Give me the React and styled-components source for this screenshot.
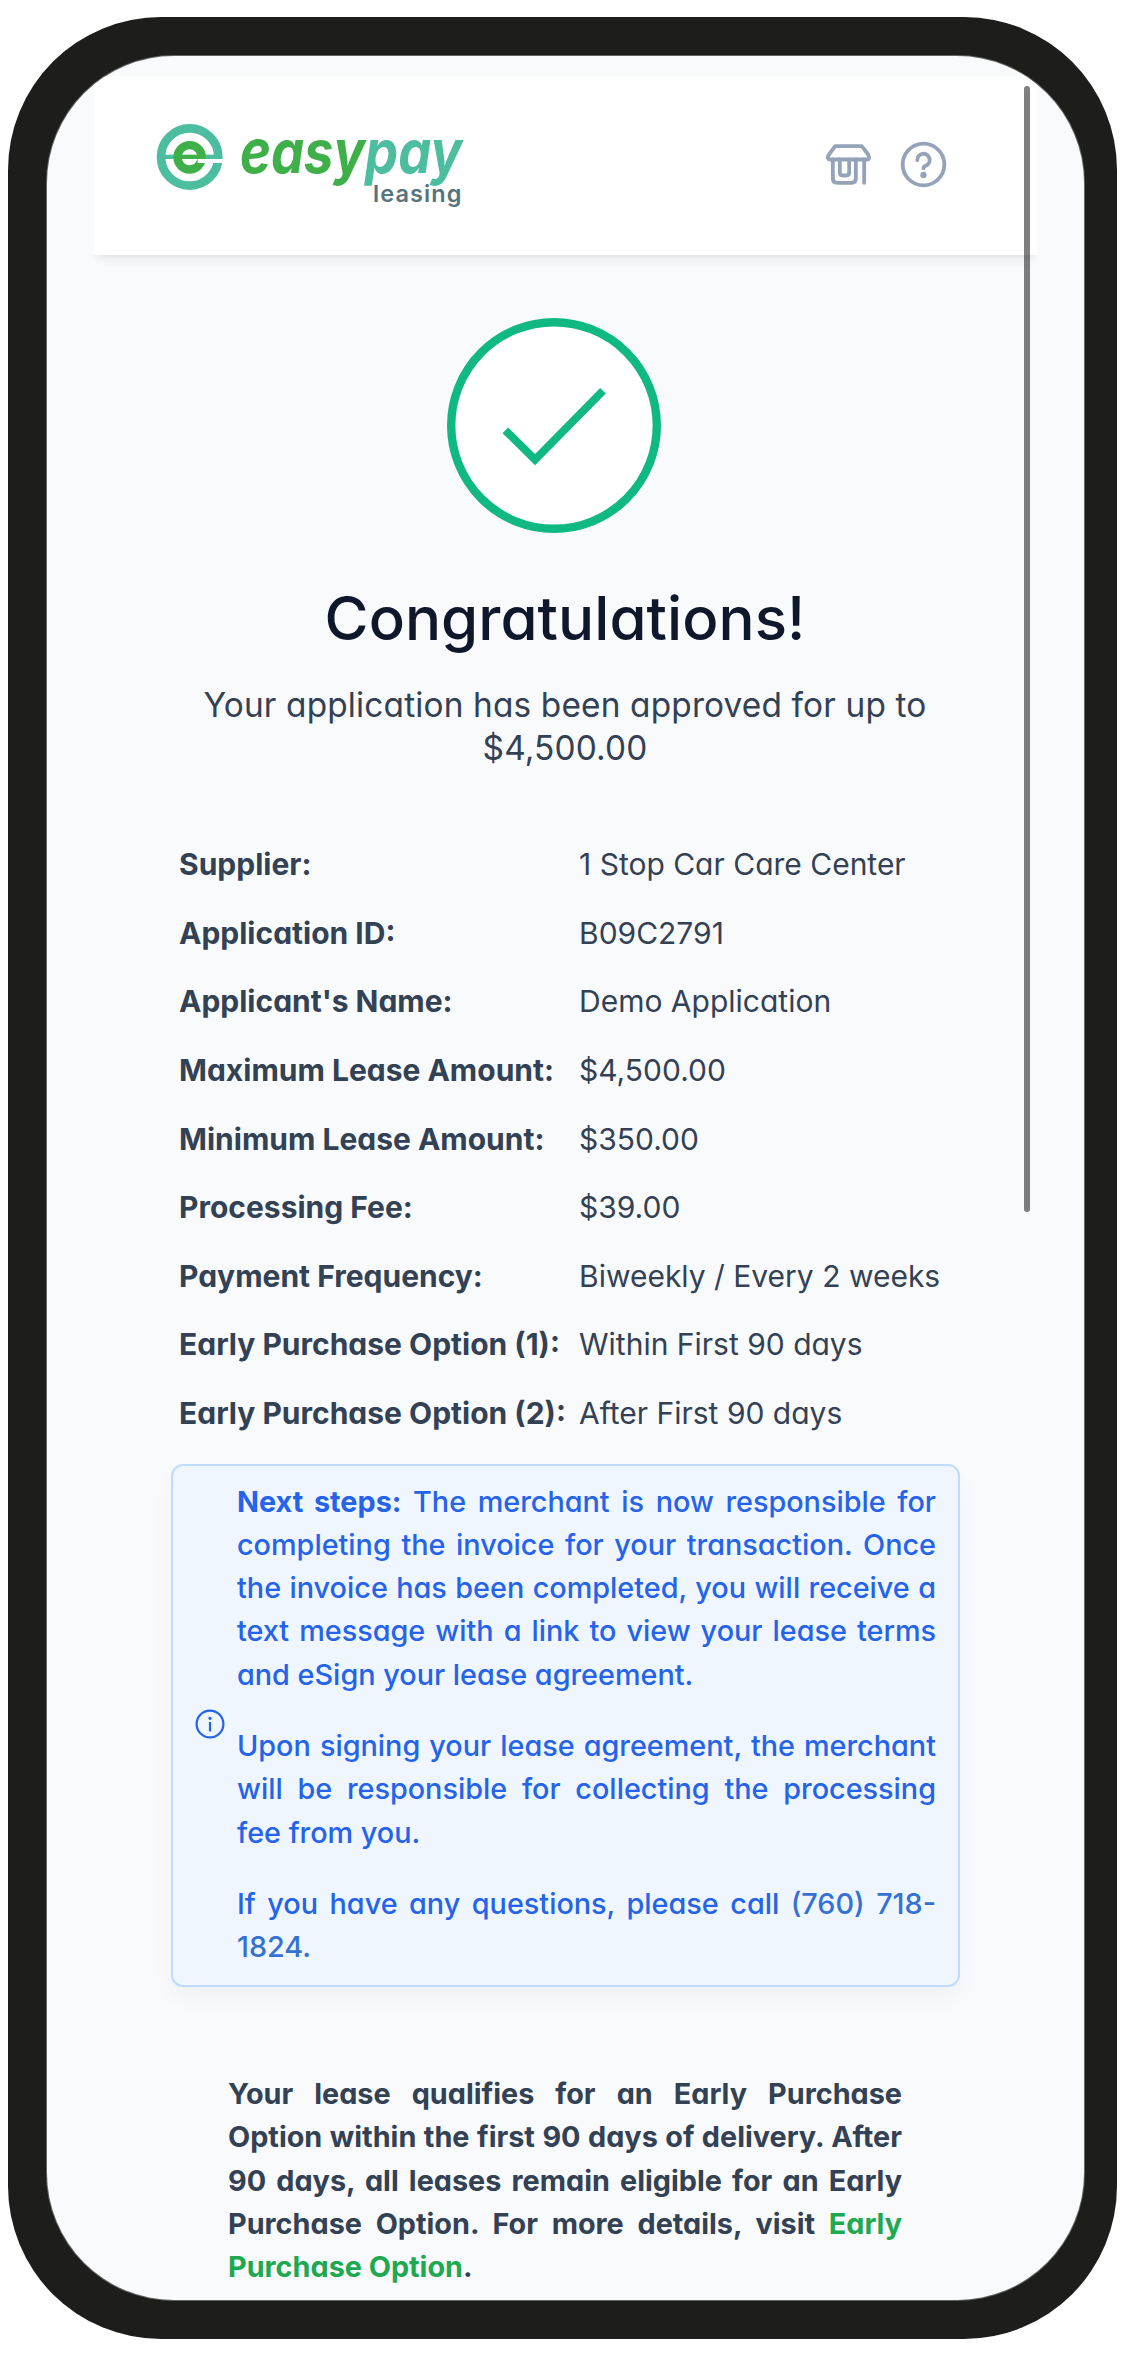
import React from "react";
import styled, { createGlobalStyle } from "styled-components";

const GlobalStyle = createGlobalStyle`
  body {
    margin: 0;
    background: #ffffff;
    font-family: Inter, "Liberation Sans", sans-serif;
    font-feature-settings: "cv11";
    color: #334155;
  }
  *, *::before, *::after { box-sizing: border-box; }
  p, h1, dl, dd, dt { margin: 0; }
`;

const Page = styled.div`
  height: 2356px;
  padding: 17px 8px;
`;

const PhoneFrame = styled.div`
  width: 1109px;
  height: 2322px;
  padding: 39px 33px 39px 39px;
  border-radius: 153px;
  background: #1d1d1b;
`;

const Screen = styled.div`
  position: relative;
  height: 100%;
  padding: 20px 47px 0;
  border-radius: 127px;
  background: #f8fafc;
  box-shadow: 0 0 0 1px #636363;
  overflow: hidden;
`;

const Scrollbar = styled.div`
  position: absolute;
  top: 30px;
  left: 977px;
  width: 6px;
  height: 1126px;
  border-radius: 3px;
  background: rgba(0, 0, 0, 0.5);
`;

const Header = styled.header`
  display: flex;
  justify-content: space-between;
  height: 179px;
  padding: 47px 89px 0 62px;
  background: #ffffff;
  box-shadow: 0 6px 9px -3px rgba(0, 0, 0, 0.1);
  clip-path: inset(0 0 -24px 0);
`;

const HeaderIcons = styled.nav`
  display: flex;
  gap: 26px;
  height: 49px;
  margin-top: 17px;
  color: #94a3b8;
`;

const Main = styled.main`
  display: flex;
  flex-direction: column;
  padding: 63px 77px 0;
`;

const CheckBadge = styled.svg`
  align-self: center;
  width: 214px;
  height: 215px;
  margin-right: 23px;
`;

const Title = styled.h1`
  margin-top: 49px;
  margin-right: 1px;
  color: #0f172a;
  font-size: 60px;
  font-weight: 500;
  line-height: 72px;
  letter-spacing: 0.06px;
  text-align: center;
`;

const Subtitle = styled.p`
  margin: 30px 20px 0 19px;
  font-size: 33.4px;
  line-height: 43px;
  letter-spacing: 0.15px;
  text-align: center;
`;

const Details = styled.dl`
  display: grid;
  grid-template-columns: 400px 1fr;
  grid-auto-rows: 68.6px;
  align-items: center;
  margin-top: 60px;
  padding-left: 8px;
  font-size: 30px;
`;

const Label = styled.dt`
  font-weight: 700;
  white-space: nowrap;
`;

const Value = styled.dd`
  white-space: nowrap;
`;

const Notice = styled.section`
  display: flex;
  align-items: center;
  gap: 12px;
  margin-top: 17px;
  padding: 13.500px 22px 16.500px;
  border: 2px solid #bfdbfe;
  border-radius: 12px;
  background: #eff6ff;
  box-shadow: 0 12px 22px -4px rgba(100, 116, 139, 0.07);
  color: #2563eb;
`;

const InfoIcon = styled.svg`
  flex: none;
  width: 30px;
  height: 30px;
`;

const NoticeText = styled.div`
  display: flex;
  flex-direction: column;
  gap: 28.4px;
  width: 699px;
  font-size: 28.8px;
  font-weight: 500;
  line-height: 43.2px;
  text-align: justify;
`;

const Strong = styled.strong`
  font-weight: 700;
`;

const Phone = styled.span`
  color: #3371d3;
`;

const Footnote = styled.p`
  width: 674px;
  margin: 85px 0 0 57px;
  font-size: 28.8px;
  font-weight: 700;
  line-height: 43.2px;
  text-align: justify;
`;

const Link = styled.a`
  color: #1ea951;
`;

const WordMark = styled.text`
  font-family: Inter, "Open Sans", sans-serif;
  font-style: italic;
  font-weight: 700;
  font-size: 60px;
`;

const SubMark = styled.text`
  font-family: Inter, "Open Sans", sans-serif;
  font-feature-settings: normal;
  font-weight: 600;
  font-size: 23.5px;
`;

function Logo() {
  return (
    <svg width="320" height="90" viewBox="156 123 320 90">
      <g transform="translate(150 110) scale(0.33333)">
        <circle cx="119" cy="141" r="86" fill="none" stroke="#4dbda0" strokeWidth="26" />
        <rect x="40" y="134" width="160" height="13" fill="#4dbda0" />
        <circle cx="119" cy="142" r="36.5" fill="#fff" stroke="#3fb049" strokeWidth="25" />
        <rect x="84" y="134" width="83" height="13" fill="#3fb049" />
        <rect x="143" y="147" width="78" height="12" fill="#fff" />
      </g>
      <WordMark x="240" y="173" textLength="222" lengthAdjust="spacingAndGlyphs">
        <tspan fill="#3fb049">easy</tspan>
        <tspan fill="#4dbda0">pay</tspan>
      </WordMark>
      <SubMark x="373" y="202" fill="#56747a" textLength="88.500" lengthAdjust="spacing">
        leasing
      </SubMark>
    </svg>
  );
}

function StoreIcon() {
  return (
    <svg width="49" height="49" viewBox="133.500 240.500 147 147" fill="none" stroke="currentColor" strokeWidth="11.500" strokeLinecap="round" strokeLinejoin="round">
      <path d="M167 259H247L266 284Q273 299 262 299H152Q141 299 147 286Z" />
      <path d="M160 299V356Q160 369 173 369H216Q229 369 229 356V299" />
      <path d="M181 299V338Q181 347 190 347H200Q209 347 209 338V299" />
      <path d="M254 299V369" />
    </svg>
  );
}

function HelpIcon() {
  return (
    <svg width="49" height="49" viewBox="358.500 240.500 147 147" fill="none" stroke="currentColor" strokeWidth="11.500" strokeLinecap="round" strokeLinejoin="round">
      <circle cx="432" cy="314" r="62.500" />
      <path d="M413.500 301A18.500 18.500 0 1 1 440 317Q432 320 432 325" />
      <circle cx="432" cy="345.500" r="9.500" fill="currentColor" stroke="none" />
    </svg>
  );
}

const rows = [
  ["Supplier:", "1 Stop Car Care Center"],
  ["Application ID:", "B09C2791"],
  ["Applicant's Name:", "Demo Application"],
  ["Maximum Lease Amount:", "$4,500.00"],
  ["Minimum Lease Amount:", "$350.00"],
  ["Processing Fee:", "$39.00"],
  ["Payment Frequency:", "Biweekly / Every 2 weeks"],
  ["Early Purchase Option (1):", "Within First 90 days"],
  ["Early Purchase Option (2):", "After First 90 days"],
];

export default function App() {
  return (
    <Page>
      <GlobalStyle />
      <PhoneFrame>
        <Screen>
          <Header>
            <Logo />
            <HeaderIcons>
              <StoreIcon />
              <HelpIcon />
            </HeaderIcons>
          </Header>
          <Main>
            <CheckBadge viewBox="0 0 214 215" fill="none" stroke="#10b981">
              <ellipse cx="107" cy="107.500" rx="102.800" ry="103.300" fill="#fff" strokeWidth="8.400" />
              <path d="M58.300 112.300L88 141.700L156 72.700" strokeWidth="8" />
            </CheckBadge>
            <Title>Congratulations!</Title>
            <Subtitle>Your application has been approved for up to $4,500.00</Subtitle>
            <Details>
              {rows.map(([label, value]) => (
                <React.Fragment key={label}>
                  <Label>{label}</Label>
                  <Value>{value}</Value>
                </React.Fragment>
              ))}
            </Details>
            <Notice>
              <InfoIcon viewBox="0 0 30 30" fill="none" stroke="currentColor" strokeWidth="2.200">
                <circle cx="15" cy="15" r="13.400" />
                <path d="M15 13V22.500" />
                <circle cx="15" cy="9.300" r="1.600" fill="currentColor" stroke="none" />
              </InfoIcon>
              <NoticeText>
                <p>
                  <Strong>Next steps:</Strong> The merchant is now responsible for completing the
                  invoice for your transaction. Once the invoice has been completed, you will
                  receive a text message with a link to view your lease terms and eSign your lease
                  agreement.
                </p>
                <p>
                  Upon signing your lease agreement, the merchant will be responsible for
                  collecting the processing fee from you.
                </p>
                <p>
                  If you have any questions, please call <Phone>(760) 718-1824.</Phone>
                </p>
              </NoticeText>
            </Notice>
            <Footnote>
              Your lease qualifies for an Early Purchase Option within the first 90 days of
              delivery. After 90 days, all leases remain eligible for an Early Purchase Option. For
              more details, visit <Link>Early Purchase Option</Link>.
            </Footnote>
          </Main>
          <Scrollbar />
        </Screen>
      </PhoneFrame>
    </Page>
  );
}
